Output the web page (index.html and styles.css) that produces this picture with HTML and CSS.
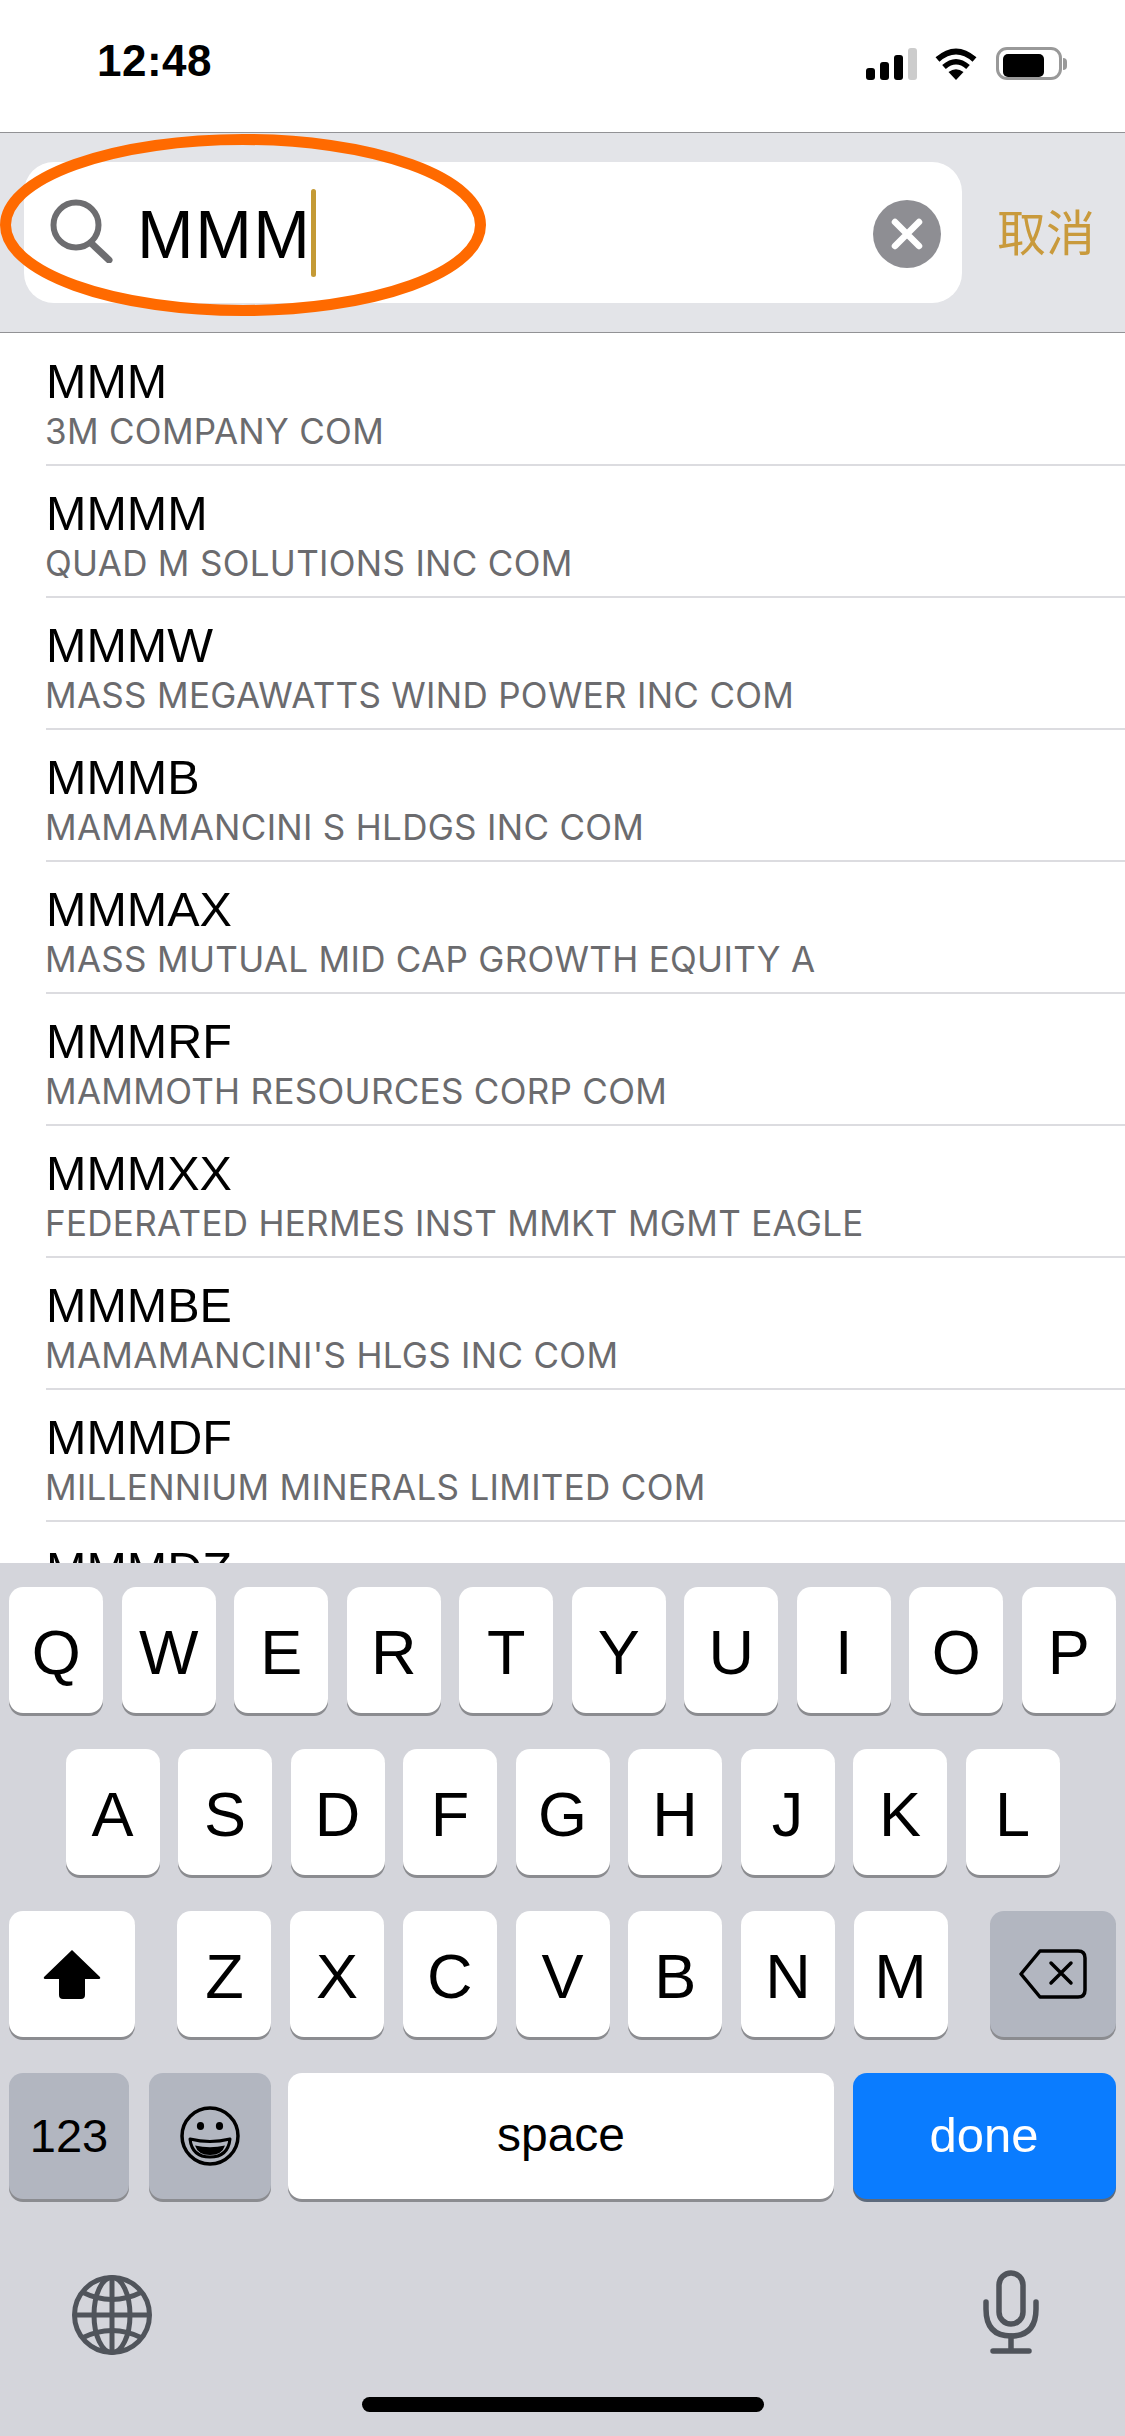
FILE: index.html
```html
<!DOCTYPE html>
<html>
<head>
    <meta charset="UTF-8">
    <title>Symbol search</title>
    <link rel="stylesheet" href="styles.css">
</head>
<body>
    <div id="screen">
        <div id="status-bar">
            <span class="time">12:48</span>
            <div class="status-icons">
                <div class="signal">
                    <span class="bar bar-1"></span>
                    <span class="bar bar-2"></span>
                    <span class="bar bar-3"></span>
                    <span class="bar bar-4"></span>
                </div>
                <svg class="wifi" width="42" height="32" viewBox="0 0 42 32">
                    <path d="M21 32 L13.5 24 Q21 18.5 28.5 24 Z" fill="#000"/>
                    <path d="M9 19 Q21 8.5 33 19" fill="none" stroke="#000" stroke-width="5.5"/>
                    <path d="M2.5 11.5 Q21 -4.5 39.5 11.5" fill="none" stroke="#000" stroke-width="6"/>
                </svg>
                <div class="battery"><span class="battery-level"></span></div>
                <span class="battery-nub"></span>
            </div>
        </div>

        <div id="search-bar">
            <div class="search-field">
                <svg class="search-icon" width="64" height="64" viewBox="0 0 64 64">
                    <circle cx="26" cy="26" r="22.5" fill="none" stroke="#6d6d70" stroke-width="6"/>
                    <path d="M41 44 L59 61" fill="none" stroke="#6d6d70" stroke-width="7" stroke-linecap="round"/>
                </svg>
                <span class="search-text">MMM</span>
                <span class="caret"></span>
                <svg class="clear-icon" width="68" height="68" viewBox="0 0 68 68">
                    <circle cx="34" cy="34" r="34" fill="#8e8e93"/>
                    <path d="M22 22 L46 46 M46 22 L22 46" stroke="#fff" stroke-width="6.5" stroke-linecap="round"/>
                </svg>
            </div>
            <span class="cancel">取消</span>
            <svg class="highlight" width="490" height="186" viewBox="0 0 490 186">
                <ellipse cx="243" cy="92" rx="237.5" ry="85.5" fill="none" stroke="#ff6a00" stroke-width="11"/>
            </svg>
        </div>

        <div id="results">
            <div class="result"><div class="symbol">MMM</div><div class="company">3M COMPANY COM</div></div>
            <div class="result"><div class="symbol">MMMM</div><div class="company">QUAD M SOLUTIONS INC COM</div></div>
            <div class="result"><div class="symbol">MMMW</div><div class="company">MASS MEGAWATTS WIND POWER INC COM</div></div>
            <div class="result"><div class="symbol">MMMB</div><div class="company">MAMAMANCINI S HLDGS INC COM</div></div>
            <div class="result"><div class="symbol">MMMAX</div><div class="company">MASS MUTUAL MID CAP GROWTH EQUITY A</div></div>
            <div class="result"><div class="symbol">MMMRF</div><div class="company">MAMMOTH RESOURCES CORP COM</div></div>
            <div class="result"><div class="symbol">MMMXX</div><div class="company">FEDERATED HERMES INST MMKT MGMT EAGLE</div></div>
            <div class="result"><div class="symbol">MMMBE</div><div class="company">MAMAMANCINI'S HLGS INC COM</div></div>
            <div class="result"><div class="symbol">MMMDF</div><div class="company">MILLENNIUM MINERALS LIMITED COM</div></div>
            <div class="result"><div class="symbol">MMMDZ</div></div>
        </div>

        <div id="keyboard">
            <div class="key-row">
                <div class="key">Q</div><div class="key">W</div><div class="key">E</div><div class="key">R</div><div class="key">T</div>
                <div class="key">Y</div><div class="key">U</div><div class="key">I</div><div class="key">O</div><div class="key">P</div>
            </div>
            <div class="key-row">
                <div class="key">A</div><div class="key">S</div><div class="key">D</div><div class="key">F</div><div class="key">G</div>
                <div class="key">H</div><div class="key">J</div><div class="key">K</div><div class="key">L</div>
            </div>
            <div class="key-row row-shift">
                <div class="key key-wide">
                    <svg width="58" height="50" viewBox="0 0 58 50">
                        <path d="M29 1 L57 28 Q58 30 55 30 L42 30 L42 46 Q42 50 38 50 L20 50 Q16 50 16 46 L16 30 L3 30 Q0 30 1 28 Z" fill="#000"/>
                    </svg>
                </div>
                <div class="letters">
                    <div class="key">Z</div><div class="key">X</div><div class="key">C</div><div class="key">V</div>
                    <div class="key">B</div><div class="key">N</div><div class="key">M</div>
                </div>
                <div class="key key-wide key-gray">
                    <svg width="68" height="50" viewBox="0 0 68 50">
                        <path d="M21 2 L59 2 Q66 2 66 9 L66 41 Q66 48 59 48 L21 48 L2 25 Z" fill="none" stroke="#000" stroke-width="3.5" stroke-linejoin="round"/>
                        <path d="M32 14 L52 34 M52 14 L32 34" stroke="#000" stroke-width="3.5" stroke-linecap="round"/>
                    </svg>
                </div>
            </div>
            <div class="key-row row-bottom">
                <div class="key key-gray key-num">123</div>
                <div class="key key-gray key-emoji">
                    <svg width="60" height="60" viewBox="0 0 60 60">
                        <circle cx="30" cy="30" r="28" fill="none" stroke="#000" stroke-width="3.5"/>
                        <ellipse cx="20.5" cy="20" rx="3.6" ry="4" fill="#000"/>
                        <ellipse cx="39.5" cy="20" rx="3.6" ry="4" fill="#000"/>
                        <path d="M10 33 Q30 38 50 33 Q48 51 30 51 Q12 51 10 33 Z" fill="none" stroke="#000" stroke-width="3" stroke-linejoin="round"/>
                        <path d="M15 39.5 Q30 43 45 39.5 Q42 49 30 49 Q18 49 15 39.5 Z" fill="#000"/>
                    </svg>
                </div>
                <div class="key key-space">space</div>
                <div class="key key-done">done</div>
            </div>
            <div class="key-tools">
                <svg width="80" height="80" viewBox="0 0 80 80" fill="none" stroke="#50545b" stroke-width="5">
                    <circle cx="40" cy="40" r="37.5"/>
                    <ellipse cx="40" cy="40" rx="18" ry="37.5"/>
                    <path d="M40 2 L40 78 M2 40 L78 40"/>
                    <path d="M10 17 Q40 32 70 17 M10 63 Q40 48 70 63"/>
                </svg>
                <svg class="mic" width="56" height="84" viewBox="0 0 56 84" fill="none" stroke="#50545b" stroke-width="5.5" stroke-linecap="round">
                    <rect x="16" y="3" width="24" height="51" rx="12"/>
                    <path d="M3 32 L3 39 Q3 66 28 66 Q53 66 53 39 L53 32"/>
                    <path d="M28 66 L28 80 M10 81 L46 81"/>
                </svg>
            </div>
            <div class="home-bar"></div>
        </div>
    </div>
</body>
</html>
```

FILE: styles.css
```css
* {
    box-sizing: border-box;
}

body {
    margin: 0;
    font-family: "Liberation Sans", "Noto Sans CJK SC", sans-serif;
    background-color: #fff;
}

#screen {
    width: 1125px;
    height: 2436px;
    display: flex;
    flex-direction: column;
    overflow: hidden;
}

/* status bar */
#status-bar {
    height: 132px;
    flex-shrink: 0;
    display: flex;
    justify-content: space-between;
    align-items: flex-start;
    padding: 36px 58px 0 97px;
}

.time {
    font-size: 44px;
    line-height: 50px;
    font-weight: bold;
    letter-spacing: 0.5px;
    color: #000;
}

.status-icons {
    display: flex;
    align-items: flex-end;
    height: 33px;
    margin-top: 11px;
}

.signal {
    display: flex;
    align-items: flex-end;
    gap: 5px;
    margin-right: 18px;
}

.bar {
    width: 9px;
    background-color: #000;
    border-radius: 3px;
}

.bar-1 { height: 12px; }
.bar-2 { height: 18px; }
.bar-3 { height: 25px; }
.bar-4 { height: 32px; background-color: #ccc; }

.wifi {
    margin-right: 19px;
}

.battery {
    width: 66px;
    height: 33px;
    padding: 5px;
    border: 3px solid #999;
    border-radius: 11px;
    display: flex;
}

.battery-level {
    width: 41px;
    height: 23px;
    margin: -1px 0 0 -1px;
    background-color: #000;
    border-radius: 5px;
}

.battery-nub {
    width: 4px;
    height: 12px;
    margin: 0 0 10px 1px;
    background-color: #999;
    border-radius: 0 4px 4px 0;
}

/* search bar */
#search-bar {
    position: relative;
    height: 201px;
    flex-shrink: 0;
    display: flex;
    align-items: center;
    padding: 0 20px 0 24px;
    background-color: #e3e4e8;
    border-top: 1px solid #929295;
    border-bottom: 1px solid #929295;
}

.search-field {
    width: 938px;
    height: 141px;
    flex-shrink: 0;
    display: flex;
    align-items: center;
    padding: 0 21px 0 26px;
    background-color: #fff;
    border-radius: 30px;
}

.search-icon {
    margin-top: -4px;
    flex-shrink: 0;
}

.search-text {
    margin-top: 3px;
    margin-left: 23px;
    font-size: 68px;
    letter-spacing: 1.5px;
    color: #000;
}

.caret {
    width: 5px;
    height: 88px;
    margin-top: 1px;
    background-color: #c49a35;
    border-radius: 3px;
}

.clear-icon {
    margin-left: auto;
    margin-top: 2px;
    flex-shrink: 0;
}

.cancel {
    margin-left: 35px;
    margin-bottom: 6px;
    font-size: 49px;
    white-space: nowrap;
    font-family: "Noto Sans CJK SC", sans-serif;
    color: #c99a3c;
}

.highlight {
    position: absolute;
    left: 0;
    top: 0;
}

/* results */
#results {
    flex: 1;
    overflow: hidden;
    padding-top: 1px;
    background-color: #fff;
}

.result {
    height: 132px;
    margin-left: 46px;
    padding-top: 20px;
    border-bottom: 2px solid #dcdce0;
}

.symbol {
    font-size: 48.5px;
    line-height: 54px;
    color: #000;
}

.company {
    margin-top: 3px;
    margin-left: -1px;
    font-family: "Inter", "Liberation Sans", sans-serif;
    font-size: 35px;
    line-height: 40px;
    letter-spacing: 0.3px;
    color: #6b6b6e;
}

/* keyboard */
#keyboard {
    height: 873px;
    flex-shrink: 0;
    padding-top: 24px;
    background-color: #d4d5db;
}

.key-row {
    display: flex;
    justify-content: center;
    gap: 18.5px;
    margin-bottom: 36px;
}

.row-shift {
    justify-content: space-between;
    padding: 0 9px;
}

.letters {
    display: flex;
    gap: 18.7px;
}

.row-bottom {
    justify-content: flex-start;
    padding-left: 9px;
}

.key {
    width: 94px;
    height: 126px;
    flex-shrink: 0;
    padding-top: 4px;
    display: flex;
    align-items: center;
    justify-content: center;
    background-color: #fff;
    border-radius: 14px;
    box-shadow: 0 3px 0 #8b8c90;
    font-size: 63px;
    color: #000;
}

.key-wide {
    width: 126px;
    padding-top: 0;
}

.key-gray {
    background-color: #b2b6c0;
}

.key-num {
    width: 120px;
    padding: 0 0 2px;
    font-size: 47px;
}

.key-emoji {
    width: 122px;
    margin-left: 1.5px;
    padding-top: 0;
}

.key-space {
    width: 546px;
    margin-left: -1.5px;
    padding: 0 0 3px;
    font-size: 48px;
}

.key-done {
    width: 263px;
    padding: 0 0 3px;
    font-size: 49px;
    color: #fff;
    background-color: #0a7cff;
    box-shadow: 0 3px 0 #5d6a7c;
}

.key-tools {
    display: flex;
    justify-content: space-between;
    align-items: flex-start;
    padding: 40px 86px 0 72px;
}

.mic {
    margin-top: -5px;
}

.home-bar {
    width: 402px;
    height: 15px;
    margin: 42px auto 0;
    background-color: #000;
    border-radius: 8px;
}
```
